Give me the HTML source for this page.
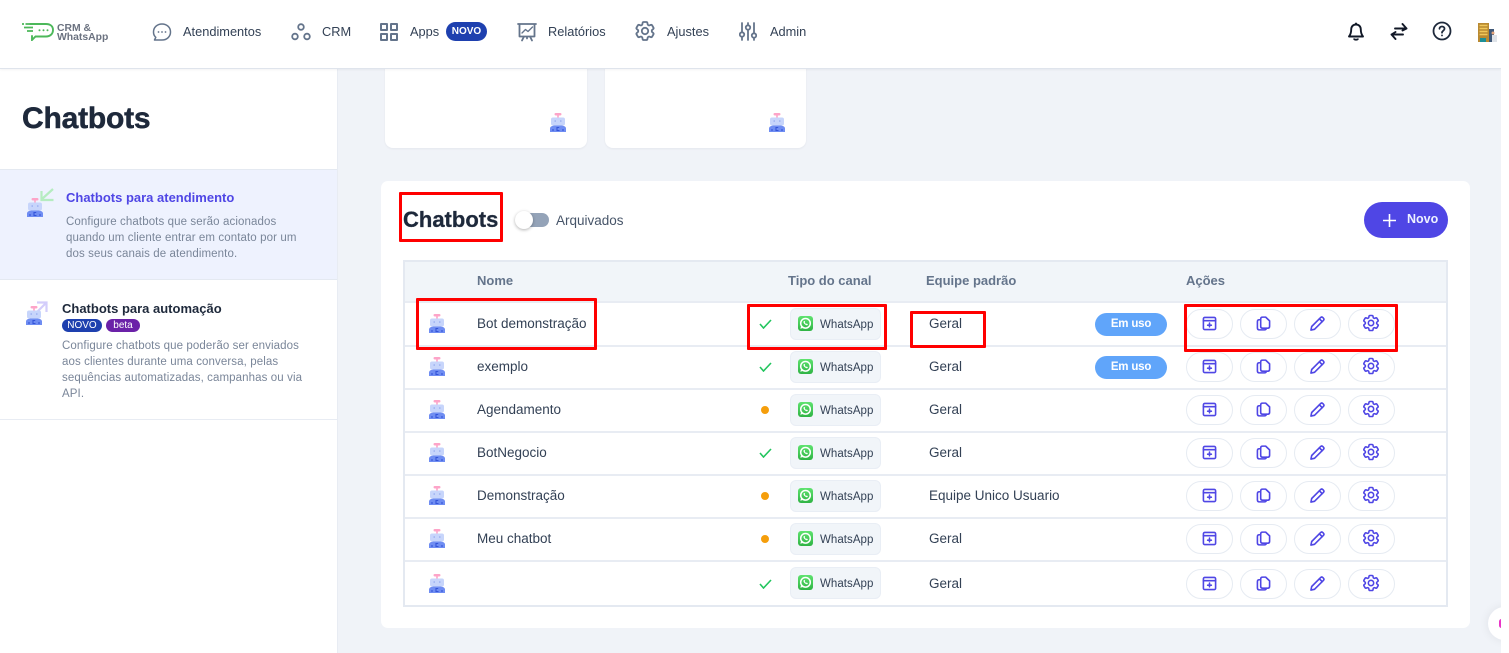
<!DOCTYPE html>
<html lang="pt"><head><meta charset="utf-8"><title>Chatbots</title>
<style>
html,body{margin:0;padding:0;background:#fff}
body{width:1509px;height:653px;overflow:hidden;position:relative;font-family:"Liberation Sans","DejaVu Sans",sans-serif;color:#1e293b}
#p{position:absolute;left:0;top:0;width:1501px;height:653px;background:#f0f3f8;overflow:hidden}
.a{position:absolute}
.t{position:absolute;white-space:nowrap;line-height:20px;height:20px}
.nav{font-size:12.8px;color:#334155;top:22px}
.th{font-size:13px;font-weight:bold;color:#64748b;top:271px}
.n{font-size:13.5px;color:#334155;transform:translateY(1px)}
.d{font-size:11.5px;color:#7a8699;letter-spacing:.1px;line-height:16px;height:16px;transform:translateY(1px)}
.line{position:absolute;left:405px;width:1041px;height:2px;background:#e8ecf3}
.chip{position:absolute;left:790px;width:91px;height:32px;background:#f1f5f9;border:1px solid #e9eef5;box-sizing:border-box;border-radius:6px}
.wa{position:absolute;left:798px;width:15px;height:15px;border-radius:3px;background:linear-gradient(#5fe36f,#2fb344)}
.wt{font-size:11.5px;left:820px;color:#334155;letter-spacing:.05px;transform:translateY(1px)}
.btn{position:absolute;width:47px;height:30px;box-sizing:border-box;background:#fff;border:1.5px solid #e6ebf2;border-radius:15px}
.btn svg{position:absolute;left:15px;top:6px;width:15px;height:15px}
.btn svg.gs{left:12px;top:3px;width:20px;height:20px;fill:none;stroke:#4f46e5;stroke-width:1.900;stroke-linejoin:round}
.pill{position:absolute;left:1095px;width:72px;height:23px;border-radius:12px;background:#60a5fa;color:#fff;font-size:11.5px;font-weight:bold;letter-spacing:-.2px;text-align:center;line-height:23px}
.red{position:absolute;box-sizing:border-box;border:3px solid #f00;border-radius:1px}
.ic{position:absolute;fill:none;stroke:#64748b;stroke-width:1.8;stroke-linecap:round;stroke-linejoin:round}
.rb{position:absolute;width:16px;height:19px}
.ck{position:absolute;left:759px;width:13px;height:10px;fill:none;stroke:#22c55e;stroke-width:1.6}
.dot{position:absolute;left:761px;width:8px;height:8px;border-radius:50%;background:#f59e0b}
</style></head><body>
<svg width="0" height="0" style="position:absolute">
<symbol id="r" viewBox="0 0 16 19">
<rect x="4.500" y="0" width="7" height="2.500" rx="1.200" fill="#fda4c8"/><rect x="7.200" y="2" width="1.600" height="3" fill="#fda4c8"/>
<rect x="1" y="4.500" width="14" height="8" rx="2" fill="#c7d5fb"/><circle cx="5.200" cy="8" r=".8" fill="#93a8ee"/><circle cx="10.800" cy="8" r=".8" fill="#93a8ee"/>
<path d="M0 19v-3.500C0 13.500 2.500 12.500 5 12.500h6c2.500 0 5 1 5 3V19z" fill="#6f8df2"/><path d="M9.200 14.500H7v3h2.500M3 16v2M13 16v2" stroke="#3454d8" stroke-width="1.100" fill="none"/>
</symbol>
<symbol id="i1" viewBox="0 0 16 16"><g fill="none" stroke="#4f46e5" stroke-width="1.700" stroke-linejoin="round" stroke-linecap="round"><rect x="1.500" y="1.500" width="13" height="13" rx="1.500"/><path d="M1.500 5h13"/><path d="M8 7.500v4M6 9.800h4" stroke-width="1.700"/></g></symbol>
<symbol id="i2" viewBox="0 0 16 16"><g fill="none" stroke="#4f46e5" stroke-width="1.700" stroke-linejoin="round" stroke-linecap="round"><path d="M5 3.200C5 2 5.800 1.200 7 1.200h3.300L14.500 5.200V11c0 1.200-.8 2-2 2H7c-1.200 0-2-.8-2-2z"/><path d="M5 4H3.500C2.300 4 1.500 4.800 1.500 6v6.800c0 1.200.8 2 2 2H9c1.200 0 2-.8 2-1.800"/></g></symbol>
<symbol id="i3" viewBox="0 0 16 16"><g fill="none" stroke="#4f46e5" stroke-width="1.700" stroke-linejoin="round" stroke-linecap="round"><path d="M1 15l.8-3.800L11.300 1.700c.7-.7 1.700-.7 2.400 0l.6.6c.7.7.7 1.700 0 2.400L4.800 14.200z"/><path d="M10 3l3 3"/></g></symbol>
<symbol id="g" viewBox="0 0 24 24"><path d="M9.594 3.94c.09-.542.56-.94 1.110-.94h2.593c.55 0 1.020.398 1.110.94l.213 1.281c.063.374.313.686.645.870.074.040.147.083.220.127.325.196.720.257 1.075.124l1.217-.456a1.125 1.125 0 011.370.490l1.296 2.247a1.125 1.125 0 01-.260 1.431l-1.003.827c-.293.241-.438.613-.430.992a7.723 7.723 0 010 .255c-.008.378.137.750.430.991l1.004.827c.424.350.534.955.260 1.430l-1.298 2.247a1.125 1.125 0 01-1.369.491l-1.217-.456c-.355-.133-.750-.072-1.076.124a6.470 6.470 0 01-.220.128c-.331.183-.581.495-.644.869l-.213 1.281c-.090.543-.560.940-1.110.940h-2.594c-.550 0-1.019-.398-1.110-.940l-.213-1.281c-.062-.374-.312-.686-.644-.870a6.520 6.520 0 01-.220-.127c-.325-.196-.720-.257-1.076-.124l-1.217.456a1.125 1.125 0 01-1.369-.490l-1.297-2.247a1.125 1.125 0 01.260-1.431l1.004-.827c.292-.240.437-.613.430-.991a6.932 6.932 0 010-.255c.007-.380-.138-.751-.430-.992l-1.004-.827a1.125 1.125 0 01-.260-1.430l1.297-2.247a1.125 1.125 0 011.370-.491l1.216.456c.356.133.751.072 1.076-.124.072-.044.146-.086.220-.128.332-.183.582-.495.644-.869l.214-1.280z"/><circle cx="12" cy="12" r="3.200"/></symbol>
<symbol id="waI" viewBox="0 0 15 15"><circle cx="7.500" cy="7.300" r="4.800" fill="none" stroke="#fff" stroke-width="1.500"/><path d="M2.300 12.800l1-3.500 2.400 2.400z" fill="#fff"/><path d="M5.700 5.200c-.6.900.1 2.200 1.100 3s2.200 1.400 2.800.8l.2-.9-1.100-.6-.5.4c-.6-.2-1.100-.8-1.400-1.400l.4-.5-.6-1.100z" fill="#fff"/></symbol>
</svg>
<div id="p">

<!-- top cards -->
<div class="a" style="left:385px;top:60px;width:202px;height:88px;background:#fff;border-radius:0 0 8px 8px;box-shadow:0 1px 2px rgba(15,23,42,.05)"></div>
<div class="a" style="left:605px;top:60px;width:201px;height:88px;background:#fff;border-radius:0 0 8px 8px;box-shadow:0 1px 2px rgba(15,23,42,.05)"></div>
<svg class="rb" style="left:550px;top:113px"><use href="#r"/></svg>
<svg class="rb" style="left:769px;top:113px"><use href="#r"/></svg>

<!-- sidebar -->
<div class="a" style="left:0;top:68px;width:337px;height:585px;background:#fff;border-right:1px solid #e8ecf3"></div>
<div class="t" style="left:22px;top:101px;height:36px;line-height:36px;font-size:30px;font-weight:bold;color:#1e293b;letter-spacing:-.2px;-webkit-text-stroke:.5px #1e293b">Chatbots</div>
<div class="a" style="left:0;top:169px;width:337px;height:111px;background:#eef2fe;border-top:1px solid #e4e9f1;border-bottom:1px solid #e4e9f1;box-sizing:border-box"></div>
<div class="a" style="left:0;top:419px;width:337px;height:1px;background:#e8ecf3"></div>

<svg class="a" style="left:39px;top:187px;width:16px;height:16px" viewBox="0 0 16 16" fill="none" stroke="#b5ecc0" stroke-width="2.200"><path d="M14 2 3 12M2.500 4v9h12"/></svg>
<svg class="rb" style="left:27px;top:198px"><use href="#r"/></svg>
<div class="t" style="left:66px;top:188px;font-size:13px;font-weight:bold;color:#4f46e5">Chatbots para atendimento</div>
<div class="t d" style="left:66px;top:213px">Configure chatbots que serão acionados</div>
<div class="t d" style="left:66px;top:229px">quando um cliente entrar em contato por um</div>
<div class="t d" style="left:66px;top:245px">dos seus canais de atendimento.</div>

<svg class="a" style="left:32px;top:300px;width:16px;height:16px" viewBox="0 0 16 16" fill="none" stroke="#d3cdfb" stroke-width="2.200"><path d="M3 14 14 3M5 2.500h9.500V12"/></svg>
<svg class="rb" style="left:26px;top:306px"><use href="#r"/></svg>
<div class="t" style="left:62px;top:299px;font-size:13px;font-weight:bold;color:#1e293b">Chatbots para automação</div>
<div class="a" style="left:62px;top:319px;width:40px;height:13px;border-radius:7px;background:#1e40af;color:#fff;font-size:10px;line-height:13px;text-align:center">NOVO</div>
<div class="a" style="left:106px;top:319px;width:34px;height:13px;border-radius:7px;background:#6b21a8;color:#fff;font-size:10px;line-height:13px;text-align:center">beta</div>
<div class="t d" style="left:62px;top:337px">Configure chatbots que poderão ser enviados</div>
<div class="t d" style="left:62px;top:353px">aos clientes durante uma conversa, pelas</div>
<div class="t d" style="left:62px;top:369px">sequências automatizadas, campanhas ou via</div>
<div class="t d" style="left:62px;top:385px">API.</div>

<!-- topbar -->
<div class="a" style="left:0;top:0;width:1501px;height:68px;background:#fff;border-bottom:1px solid #dfe4ec;box-shadow:0 1px 2px rgba(15,23,42,.05)"></div>
<svg class="a" style="left:21px;top:22px;width:34px;height:19px" viewBox="0 0 34 19" fill="none" stroke="#4cb85a" stroke-width="1.900"><path d="M9 2h16c4 0 7 2 7 6s-3 6.500-7 6.500H14.500L11 18v-4" stroke-linecap="round"/><path d="M1 2h2M4.500 2h4M3 5.500h9M6 9h6" stroke-width="1.700"/><circle cx="18.500" cy="8.300" r="1" fill="#4cb85a" stroke="none"/><circle cx="22.500" cy="8.300" r="1" fill="#4cb85a" stroke="none"/><circle cx="26.500" cy="8.300" r="1" fill="#4cb85a" stroke="none"/></svg>
<div class="a" style="left:57px;top:24px;font-size:10.400px;line-height:9px;font-weight:bold;color:#6b7280;white-space:nowrap">CRM &amp;<br>WhatsApp</div>

<svg class="ic" style="left:152px;top:22px;width:20px;height:20px" viewBox="0 0 20 20"><path d="M10 2c4.700 0 8.500 3.300 8.500 8s-3.800 8-8.500 8H2.500l1.300-2.700C2 13.800 1.500 12 1.500 10 1.500 5.300 5.300 2 10 2z" stroke-width="1.500"/><path d="M6.500 10h.01M10 10h.01M13.500 10h.01"/></svg>
<div class="t nav" style="left:183px">Atendimentos</div>
<svg class="ic" style="left:291px;top:23px;width:20px;height:18px" viewBox="0 0 20 18"><circle cx="10" cy="4" r="2.800"/><circle cx="4" cy="13.500" r="2.800"/><circle cx="16" cy="13.500" r="2.800"/></svg>
<div class="t nav" style="left:322px">CRM</div>
<svg class="ic" style="left:380px;top:23px;width:18px;height:18px;stroke-width:2" viewBox="0 0 18 18"><rect x="1" y="1" width="6" height="6"/><rect x="11" y="1" width="6" height="6"/><rect x="1" y="11" width="6" height="6"/><rect x="11" y="11" width="6" height="6"/></svg>
<div class="t nav" style="left:410px">Apps</div>
<div class="a" style="left:446px;top:22px;width:41px;height:19px;border-radius:10px;background:#1e40af;color:#fff;font-size:10px;font-weight:bold;line-height:19px;text-align:center">NOVO</div>
<svg class="ic" style="left:517px;top:22px;width:20px;height:20px" viewBox="0 0 20 20"><path d="M1 2h18M2.500 2v12.500h15V2M7 14.500 5 18.500M13 14.500l2 4M10 14.500v2"/><path d="M5 11l3.500-3.500 2.500 2L15.500 5" stroke-width="1.400"/></svg>
<div class="t nav" style="left:548px">Relatórios</div>
<svg class="a" style="left:633px;top:19px;width:24px;height:24px" viewBox="0 0 24 24" fill="none" stroke="#64748b" stroke-width="1.800" stroke-linejoin="round"><use href="#g"/></svg>
<div class="t nav" style="left:667px">Ajustes</div>
<svg class="ic" style="left:739px;top:22px;width:18px;height:19px" viewBox="0 0 18 19"><path d="M3 1v9M3 15v3M9 1v2M9 8v10M15 1v10M15 16v2"/><circle cx="3" cy="12.500" r="2.200"/><circle cx="9" cy="5.500" r="2.200"/><circle cx="15" cy="13.500" r="2.200"/></svg>
<div class="t nav" style="left:770px">Admin</div>

<svg class="a" style="left:1347px;top:22px;width:18px;height:20px" viewBox="0 0 18 20" fill="none" stroke="#111827" stroke-width="1.900" stroke-linejoin="round"><path d="M9 2.500c-3 0-4.800 2.200-4.800 5 0 4-1 5.500-2.200 7h14c-1.200-1.500-2.200-3-2.200-7 0-2.800-1.800-5-4.800-5z"/><path d="M9 .8v1.500M7 16.500c.3 1.600 3.700 1.600 4 0"/></svg>
<svg class="a" style="left:1390px;top:22px;width:18px;height:19px" viewBox="0 0 18 19" fill="none" stroke="#111827" stroke-width="1.900" stroke-linecap="round" stroke-linejoin="round"><path d="M5 6.500h11.500M12.500 2l4 4.500-4 2"/><path d="M13 12.500H1.500M5.500 10l-4 2.500 4 4.500"/></svg>
<svg class="a" style="left:1432px;top:21px;width:20px;height:20px" viewBox="0 0 20 20" fill="none" stroke="#1e293b" stroke-width="1.800" stroke-linecap="round"><circle cx="10" cy="10" r="8.500"/><path d="M7.500 7.800C7.500 6.300 8.700 5.500 10 5.500s2.500.9 2.500 2.200c0 2-2.500 2-2.500 4"/><path d="M10 14.400v.1"/></svg>
<svg class="a" style="left:1478px;top:23px;width:19px;height:19px" viewBox="0 0 19 19"><rect x="0" y="0" width="11" height="19" fill="#b98a32"/><path d="M1.500 2.500h8M1.500 5.500h8M1.500 8.500h8M1.500 11.500h8" stroke="#f0c75a" stroke-width="1.500"/><rect x="2" y="15" width="6" height="4" fill="#1d8f96"/><rect x="11" y="6" width="5" height="13" fill="#3f5878"/><rect x="14" y="12" width="5" height="7" fill="#dfe3e8"/><circle cx="15" cy="10" r="1.500" fill="#e5a47a"/></svg>

<!-- main card -->
<div class="a" style="left:381px;top:181px;width:1089px;height:447px;background:#fff;border-radius:7px"></div>
<div class="t" style="left:403px;top:205px;height:30px;line-height:30px;font-size:22px;font-weight:bold;color:#1e293b;-webkit-text-stroke:.3px #1e293b">Chatbots</div>
<div class="a" style="left:517px;top:213px;width:32px;height:14px;border-radius:7px;background:#94a3b8"></div>
<div class="a" style="left:515px;top:211px;width:18px;height:18px;border-radius:50%;background:#fff;box-shadow:0 1px 3px rgba(0,0,0,.3)"></div>
<div class="t" style="left:556px;top:211px;font-size:13.500px;color:#475569">Arquivados</div>
<div class="a" style="left:1364px;top:202px;width:84px;height:36px;border-radius:18px;background:#4f46e5"></div>
<svg class="a" style="left:1382px;top:213px;width:15px;height:15px" viewBox="0 0 15 15" stroke="#fff" stroke-width="1.600"><path d="M7.500 1v13M1 7.500h13"/></svg>
<div class="t" style="left:1407px;top:209px;font-size:12.500px;font-weight:bold;color:#eef2ff">Novo</div>

<!-- table -->
<div class="a" style="left:403px;top:260px;width:1045px;height:347px;box-sizing:border-box;border:2px solid #e4e9f1;background:#fff"></div>
<div class="a" style="left:405px;top:262px;width:1041px;height:39px;background:#f1f5f9"></div>
<div class="t th" style="left:477px">Nome</div>
<div class="t th" style="left:788px">Tipo do canal</div>
<div class="t th" style="left:926px">Equipe padrão</div>
<div class="t th" style="left:1186px">Ações</div>
<div class="line" style="top:301px"></div><div class="line" style="top:345px"></div><div class="line" style="top:388px"></div><div class="line" style="top:431px"></div><div class="line" style="top:474px"></div><div class="line" style="top:517px"></div><div class="line" style="top:560px"></div>

<!-- row 1 -->
<svg class="rb" style="left:429px;top:314px"><use href="#r"/></svg>
<div class="t n" style="left:477px;top:313px">Bot demonstração</div>
<svg class="ck" style="top:319px" viewBox="0 0 13 10"><path d="M1 5l3.500 4L12 1"/></svg>
<div class="chip" style="top:308px"></div><div class="wa" style="top:316px"><svg width="15" height="15"><use href="#waI"/></svg></div><div class="t wt" style="top:314px">WhatsApp</div>
<div class="t n" style="left:929px;top:313px">Geral</div>
<div class="pill" style="top:313px">Em uso</div>
<div class="btn" style="left:1186px;top:309px"><svg><use href="#i1"/></svg></div><div class="btn" style="left:1240px;top:309px"><svg><use href="#i2"/></svg></div><div class="btn" style="left:1294px;top:309px"><svg><use href="#i3"/></svg></div><div class="btn" style="left:1348px;top:309px"><svg class="gs"><use href="#g"/></svg></div>
<!-- row 2 -->
<svg class="rb" style="left:429px;top:357px"><use href="#r"/></svg>
<div class="t n" style="left:477px;top:356px">exemplo</div>
<svg class="ck" style="top:362px" viewBox="0 0 13 10"><path d="M1 5l3.500 4L12 1"/></svg>
<div class="chip" style="top:351px"></div><div class="wa" style="top:359px"><svg width="15" height="15"><use href="#waI"/></svg></div><div class="t wt" style="top:357px">WhatsApp</div>
<div class="t n" style="left:929px;top:356px">Geral</div>
<div class="pill" style="top:356px">Em uso</div>
<div class="btn" style="left:1186px;top:352px"><svg><use href="#i1"/></svg></div><div class="btn" style="left:1240px;top:352px"><svg><use href="#i2"/></svg></div><div class="btn" style="left:1294px;top:352px"><svg><use href="#i3"/></svg></div><div class="btn" style="left:1348px;top:352px"><svg class="gs"><use href="#g"/></svg></div>
<!-- row 3 -->
<svg class="rb" style="left:429px;top:400px"><use href="#r"/></svg>
<div class="t n" style="left:477px;top:399px">Agendamento</div>
<div class="dot" style="top:406px"></div>
<div class="chip" style="top:394px"></div><div class="wa" style="top:402px"><svg width="15" height="15"><use href="#waI"/></svg></div><div class="t wt" style="top:400px">WhatsApp</div>
<div class="t n" style="left:929px;top:399px">Geral</div>
<div class="btn" style="left:1186px;top:395px"><svg><use href="#i1"/></svg></div><div class="btn" style="left:1240px;top:395px"><svg><use href="#i2"/></svg></div><div class="btn" style="left:1294px;top:395px"><svg><use href="#i3"/></svg></div><div class="btn" style="left:1348px;top:395px"><svg class="gs"><use href="#g"/></svg></div>
<!-- row 4 -->
<svg class="rb" style="left:429px;top:443px"><use href="#r"/></svg>
<div class="t n" style="left:477px;top:442px">BotNegocio</div>
<svg class="ck" style="top:448px" viewBox="0 0 13 10"><path d="M1 5l3.500 4L12 1"/></svg>
<div class="chip" style="top:437px"></div><div class="wa" style="top:445px"><svg width="15" height="15"><use href="#waI"/></svg></div><div class="t wt" style="top:443px">WhatsApp</div>
<div class="t n" style="left:929px;top:442px">Geral</div>
<div class="btn" style="left:1186px;top:438px"><svg><use href="#i1"/></svg></div><div class="btn" style="left:1240px;top:438px"><svg><use href="#i2"/></svg></div><div class="btn" style="left:1294px;top:438px"><svg><use href="#i3"/></svg></div><div class="btn" style="left:1348px;top:438px"><svg class="gs"><use href="#g"/></svg></div>
<!-- row 5 -->
<svg class="rb" style="left:429px;top:486px"><use href="#r"/></svg>
<div class="t n" style="left:477px;top:485px">Demonstração</div>
<div class="dot" style="top:492px"></div>
<div class="chip" style="top:480px"></div><div class="wa" style="top:488px"><svg width="15" height="15"><use href="#waI"/></svg></div><div class="t wt" style="top:486px">WhatsApp</div>
<div class="t n" style="left:929px;top:485px">Equipe Unico Usuario</div>
<div class="btn" style="left:1186px;top:481px"><svg><use href="#i1"/></svg></div><div class="btn" style="left:1240px;top:481px"><svg><use href="#i2"/></svg></div><div class="btn" style="left:1294px;top:481px"><svg><use href="#i3"/></svg></div><div class="btn" style="left:1348px;top:481px"><svg class="gs"><use href="#g"/></svg></div>
<!-- row 6 -->
<svg class="rb" style="left:429px;top:529px"><use href="#r"/></svg>
<div class="t n" style="left:477px;top:528px">Meu chatbot</div>
<div class="dot" style="top:535px"></div>
<div class="chip" style="top:523px"></div><div class="wa" style="top:531px"><svg width="15" height="15"><use href="#waI"/></svg></div><div class="t wt" style="top:529px">WhatsApp</div>
<div class="t n" style="left:929px;top:528px">Geral</div>
<div class="btn" style="left:1186px;top:524px"><svg><use href="#i1"/></svg></div><div class="btn" style="left:1240px;top:524px"><svg><use href="#i2"/></svg></div><div class="btn" style="left:1294px;top:524px"><svg><use href="#i3"/></svg></div><div class="btn" style="left:1348px;top:524px"><svg class="gs"><use href="#g"/></svg></div>
<!-- row 7 -->
<svg class="rb" style="left:429px;top:574px"><use href="#r"/></svg>
<svg class="ck" style="top:579px" viewBox="0 0 13 10"><path d="M1 5l3.500 4L12 1"/></svg>
<div class="chip" style="top:567px"></div><div class="wa" style="top:575px"><svg width="15" height="15"><use href="#waI"/></svg></div><div class="t wt" style="top:573px">WhatsApp</div>
<div class="t n" style="left:929px;top:573px">Geral</div>
<div class="btn" style="left:1186px;top:569px"><svg><use href="#i1"/></svg></div><div class="btn" style="left:1240px;top:569px"><svg><use href="#i2"/></svg></div><div class="btn" style="left:1294px;top:569px"><svg><use href="#i3"/></svg></div><div class="btn" style="left:1348px;top:569px"><svg class="gs"><use href="#g"/></svg></div>

<!-- floating circle -->
<div class="a" style="left:1488px;top:607px;width:33px;height:33px;border-radius:50%;background:#fff;box-shadow:0 0 10px rgba(15,23,42,.08)"></div>
<div class="a" style="left:1499px;top:619px;width:5px;height:9px;border-radius:3px;background:#e935c8"></div>

<!-- red annotation boxes -->
<div class="red" style="left:399px;top:192px;width:104px;height:50px"></div>
<div class="red" style="left:416px;top:298px;width:181px;height:52px"></div>
<div class="red" style="left:747px;top:304px;width:140px;height:46px"></div>
<div class="red" style="left:910px;top:311px;width:76px;height:37px"></div>
<div class="red" style="left:1184px;top:304px;width:214px;height:48px"></div>
</div>
</body></html>
